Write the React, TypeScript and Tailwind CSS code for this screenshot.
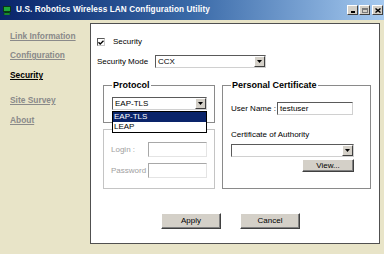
import React from "react";

function Sunken({ className = "", children }: { className?: string; children?: React.ReactNode }) {
  return (
    <div className={`bg-white border border-t-[#5a5a5a] border-l-[#5a5a5a] border-b-[#d0d0d0] border-r-[#d0d0d0] flex items-center ${className}`}>
      {children}
    </div>
  );
}

function DropBtn() {
  return (
    <div className="ml-auto w-[11px] h-full bg-[#d4d0c8] border border-t-white border-l-white border-b-[#404040] border-r-[#404040] flex items-center justify-center">
      <svg width="5" height="3" viewBox="0 0 5 3">
        <path d="M0 0h5L2.5 3z" fill="#000" />
      </svg>
    </div>
  );
}

function Btn({ children, className = "" }: { children: React.ReactNode; className?: string }) {
  return (
    <div className={`bg-[#d4d0c8] border border-t-white border-l-white border-b-[#404040] border-r-[#404040] shadow-[inset_-1px_-1px_#808080] flex items-center justify-center text-[8px] leading-none text-black ${className}`}>
      {children}
    </div>
  );
}

export default function App() {
  return (
    <div className="w-[384px] h-[254px] bg-[#e8e4c8] flex flex-col overflow-hidden font-['Liberation_Sans',Arial,sans-serif]">
      {/* Title bar */}
      <div className="h-[20px] flex items-center pl-[3px] pr-[1px] bg-linear-to-r from-[#0a246a] via-[#3a6aa8] to-[#a6caf0]">
        <svg width="8" height="9" viewBox="0 0 8 9" className="shrink-0">
          <rect x="0.5" y="0.5" width="7" height="5" fill="#1fa83c" stroke="#0a3a12" />
          <rect x="2" y="6" width="4" height="1" fill="#0a3a12" />
          <rect x="1" y="7" width="6" height="2" fill="#1fa83c" stroke="#0a3a12" strokeWidth="0.6" />
        </svg>
        <span className="ml-[5px] text-white font-bold text-[8.2px] leading-none tracking-[0.1px]">
          U.S. Robotics Wireless LAN Configuration Utility
        </span>
        <div className="ml-auto flex items-center gap-[1px]">
          <div className="w-[11px] h-[10px] bg-[#d4d0c8] border border-t-white border-l-white border-b-[#404040] border-r-[#404040] flex items-end justify-center pb-[1px]">
            <div className="w-[4px] h-[2px] bg-black" />
          </div>
          <div className="w-[11px] h-[10px] bg-[#d4d0c8] border border-t-white border-l-white border-b-[#404040] border-r-[#404040] flex items-center justify-center">
            <div className="w-[6px] h-[5px] border border-[#7a7a7a] border-t-2" />
          </div>
          <div className="ml-[1px] w-[11px] h-[10px] bg-[#d4d0c8] border border-t-white border-l-white border-b-[#404040] border-r-[#404040] flex items-center justify-center">
            <svg width="6" height="5" viewBox="0 0 6 5">
              <path d="M0.5 0.5L5.5 4.5M5.5 0.5L0.5 4.5" stroke="#000" strokeWidth="1.4" />
            </svg>
          </div>
        </div>
      </div>

      {/* Body */}
      <div className="flex-1 flex pt-[3px]">
        {/* Nav */}
        <div className="w-[90px] flex flex-col pl-[10px] pt-[8px] text-[8.4px] leading-[10px] font-bold text-[#8a8a8a]">
          <span className="underline">Link Information</span>
          <span className="underline mt-[9px]">Configuration</span>
          <span className="underline mt-[10px] text-black">Security</span>
          <span className="underline mt-[15px]">Site Survey</span>
          <span className="underline mt-[10px]">About</span>
        </div>

        {/* Panel */}
        <div className="w-[290px] h-[221px] bg-white border border-[#505050] flex flex-col pl-[6px] pt-[14px] text-[8px] text-black">
          {/* Security checkbox */}
          <div className="flex items-center h-[8px]">
            <div className="w-[8px] h-[8px] bg-white border border-t-[#5a5a5a] border-l-[#5a5a5a] border-b-[#c8c8c8] border-r-[#c8c8c8] flex items-center justify-center">
              <svg width="6" height="5" viewBox="0 0 6 5">
                <path d="M0.5 2.2L2.2 4L5.5 0.7" stroke="#000" strokeWidth="1.3" fill="none" />
              </svg>
            </div>
            <span className="ml-[8px] leading-none">Security</span>
          </div>

          {/* Security Mode */}
          <div className="flex items-center mt-[9px] h-[13px]">
            <span className="w-[58px] leading-none">Security Mode</span>
            <Sunken className="w-[111px] h-[13px]">
              <span className="pl-[2px] leading-none">CCX</span>
              <DropBtn />
            </Sunken>
          </div>

          {/* Group boxes */}
          <div className="flex mt-[12px] pl-[6px]">
            <div className="flex flex-col w-[112px]">
              <fieldset className="relative w-[112px] border border-[#8a8a8a] pl-[8px] pb-[12px] min-w-0">
                <legend className="px-[1px] text-[9px] leading-[10px] font-bold">Protocol</legend>
                <div className="relative mt-[7px] w-[95px]">
                  <Sunken className="w-[95px] h-[13px]">
                    <span className="pl-[2px] leading-none">EAP-TLS</span>
                    <DropBtn />
                  </Sunken>
                  <div className="absolute left-0 top-full mt-[1px] w-[95px] z-10 bg-white border border-black flex flex-col text-[8px] leading-[10px]">
                    <span className="bg-[#0a246a] text-white pl-[1px]">EAP-TLS</span>
                    <span className="pl-[1px]">LEAP</span>
                  </div>
                </div>
              </fieldset>
              <div className="mt-[6px] h-[60px] border border-[#c4c4c4] flex flex-col pl-[7px] pt-[12px] text-[#a0a0a0]">
                <div className="flex items-center">
                  <span className="w-[37px] leading-none">Login :</span>
                  <div className="w-[59px] h-[15px] bg-white border border-t-[#a8a8a8] border-l-[#a8a8a8] border-b-[#e4e4e4] border-r-[#e4e4e4]" />
                </div>
                <div className="flex items-center mt-[6px]">
                  <span className="w-[37px] leading-none">Password</span>
                  <div className="w-[59px] h-[15px] bg-white border border-t-[#a8a8a8] border-l-[#a8a8a8] border-b-[#e4e4e4] border-r-[#e4e4e4]" />
                </div>
              </div>
            </div>

            <fieldset className="ml-[7px] w-[149px] h-[109px] border border-[#8a8a8a] pl-[8px] min-w-0">
              <legend className="px-[1px] text-[9px] leading-[10px] font-bold">Personal Certificate</legend>
              <div className="flex items-center mt-[12px]">
                <span className="w-[46px] leading-none">User Name :</span>
                <Sunken className="w-[76px] h-[13px]">
                  <span className="pl-[2px] leading-none">testuser</span>
                </Sunken>
              </div>
              <div className="mt-[15px] leading-[10px]">Certificate of Authority</div>
              <Sunken className="mt-[4px] w-[123px] h-[13px]">
                <DropBtn />
              </Sunken>
              <div className="w-[123px] flex justify-end mt-[2px]">
                <Btn className="w-[52px] h-[13px]">View...</Btn>
              </div>
            </fieldset>
          </div>

          {/* Buttons */}
          <div className="flex mt-[24px] ml-[64px] gap-[19px]">
            <Btn className="w-[60px] h-[16px]">Apply</Btn>
            <Btn className="w-[60px] h-[16px]">Cancel</Btn>
          </div>
        </div>
      </div>
    </div>
  );
}
